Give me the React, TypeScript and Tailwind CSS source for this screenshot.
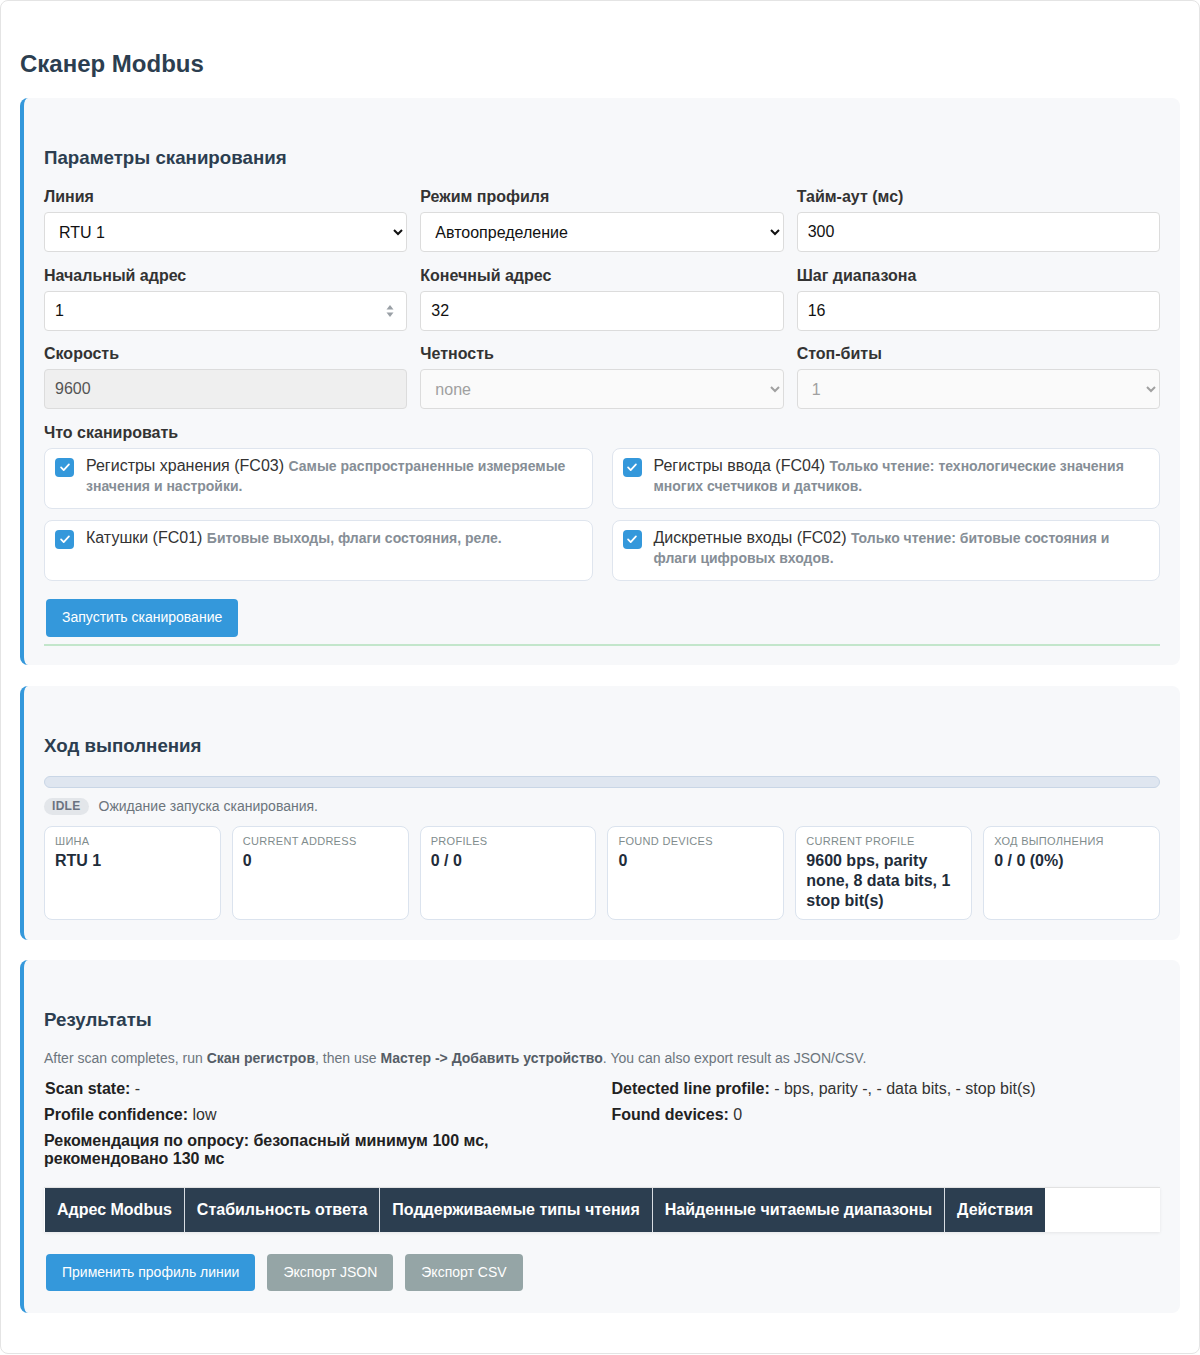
import type { ReactNode } from "react";

const font = { fontFamily: '"Liberation Sans", Arial, sans-serif' };

const scanTypes = [
  { title: "Регистры хранения (FC03)", note: "Самые распространенные измеряемые значения и настройки." },
  { title: "Регистры ввода (FC04)", note: "Только чтение: технологические значения многих счетчиков и датчиков." },
  { title: "Катушки (FC01)", note: "Битовые выходы, флаги состояния, реле." },
  { title: "Дискретные входы (FC02)", note: "Только чтение: битовые состояния и флаги цифровых входов." },
];

const stats = [
  { label: "Шина", value: "RTU 1" },
  { label: "Current address", value: "0" },
  { label: "Profiles", value: "0 / 0" },
  { label: "Found devices", value: "0" },
  { label: "Current profile", value: "9600 bps, parity none, 8 data bits, 1 stop bit(s)" },
  { label: "Ход выполнения", value: "0 / 0 (0%)" },
];

const columns = [
  "Адрес Modbus",
  "Стабильность ответа",
  "Поддерживаемые типы чтения",
  "Найденные читаемые диапазоны",
  "Действия",
];

function Section({ title, children }: { title: string; children: ReactNode }) {
  return (
    <section className="rounded-lg border-l-4 border-[#3498db] bg-[#f7f8fa] px-5 pt-5 pb-5">
      <h3 className="mt-[29px] mb-[19px] text-[18.72px] leading-[22px] font-bold text-[#2c3e50]">{title}</h3>
      {children}
    </section>
  );
}

function Field({ label, children }: { label: string; children: ReactNode }) {
  return (
    <div>
      <label className="mb-[6px] block text-[16px] leading-[18px] font-bold text-[#333]">{label}</label>
      {children}
    </div>
  );
}

// shared box geometry; colours are added per state
const boxCls = "h-10 w-full rounded-[4px] border border-[#dcdcdc] px-[10px] text-[16px] outline-none";
const activeCls = `${boxCls} bg-white text-[#111]`;
const lockedCls = `${boxCls} bg-[#fafafa] text-[#a0a0a0]`;

function CheckMark() {
  return (
    <span className="mt-[2px] flex h-[19px] w-[19px] shrink-0 items-center justify-center rounded-[4px] bg-[#3498db]">
      <svg viewBox="0 0 16 16" className="h-[14px] w-[14px]" fill="none" stroke="white" strokeWidth="2" strokeLinecap="round" strokeLinejoin="round">
        <path d="M3.5 8.5l3 3 6-6.5" />
      </svg>
    </span>
  );
}

export default function App() {
  return (
    <div className="min-h-[1355px] bg-white" style={font}>
      <div className="rounded-lg border border-[#e4e4e4] px-[19px] pt-[49px] pb-10">
        <h2 className="mb-5 text-[24px] leading-[28px] font-bold text-[#2c3e50]">Сканер Modbus</h2>

        <Section title="Параметры сканирования">
          <div className="grid grid-cols-3 gap-x-[13px] gap-y-[14.5px]">
            <Field label="Линия">
              <select className={activeCls} defaultValue="rtu1">
                <option value="rtu1">RTU 1</option>
              </select>
            </Field>
            <Field label="Режим профиля">
              <select className={activeCls} defaultValue="auto">
                <option value="auto">Автоопределение</option>
              </select>
            </Field>
            <Field label="Тайм-аут (мс)">
              <input className={activeCls} defaultValue="300" />
            </Field>
            <Field label="Начальный адрес">
              <div className="relative">
                <input className={activeCls} defaultValue="1" />
                <svg viewBox="0 0 8 14" className="absolute top-[13px] right-[13px] h-[14px] w-[8px]" fill="#9aa0a6">
                  <path d="M4 1l3.5 4.5h-7z" />
                  <path d="M4 13l3.5-4.5h-7z" />
                </svg>
              </div>
            </Field>
            <Field label="Конечный адрес">
              <input className={activeCls} defaultValue="32" />
            </Field>
            <Field label="Шаг диапазона">
              <input className={activeCls} defaultValue="16" />
            </Field>
            <Field label="Скорость">
              <input className={`${boxCls} bg-[#efefef] text-[#555]`} defaultValue="9600" disabled />
            </Field>
            <Field label="Четность">
              <select className={lockedCls} defaultValue="none" disabled>
                <option value="none">none</option>
              </select>
            </Field>
            <Field label="Стоп-биты">
              <select className={lockedCls} defaultValue="1" disabled>
                <option value="1">1</option>
              </select>
            </Field>
          </div>

          <div className="mt-[14.5px] mb-[6px] text-[16px] leading-[18px] font-bold text-[#333]">Что сканировать</div>
          <div className="grid grid-cols-2 gap-x-[19px] gap-y-[11px]">
            {scanTypes.map((t) => (
              <div key={t.title} className="flex h-[61px] gap-3 rounded-lg border border-[#dfe5ee] bg-white px-[10px] pt-[7px]">
                <CheckMark />
                <p className="text-[16px] leading-[19px] text-[#333]">
                  {t.title}{" "}
                  <span className="text-[14px] font-bold text-[#868e96]">{t.note}</span>
                </p>
              </div>
            ))}
          </div>

          <button className="mt-[18px] ml-[2px] h-[38px] rounded-[4px] bg-[#3498db] px-4 text-[14px] text-white">
            Запустить сканирование
          </button>
          <div className="mt-[7px] -mb-px h-[2px] bg-[#c3e6cb]" />
        </Section>

        <div className="h-[21px]" />

        <Section title="Ход выполнения">
          <div className="h-3 rounded-full border border-[#c9d6e6] bg-[#dfe6f0]" />
          <div className="mt-[10px] flex items-center gap-[10px]">
            <span className="rounded-full bg-[#e3e6ea] px-2 text-[12px] leading-[17px] font-bold tracking-wide text-[#6b7280]">
              IDLE
            </span>
            <span className="text-[14px] leading-[17px] text-[#6c757d]">Ожидание запуска сканирования.</span>
          </div>
          <div className="mt-[11px] grid grid-cols-6 gap-[11px]">
            {stats.map((s) => (
              <div key={s.label} className="rounded-lg border border-[#dbe3ee] bg-white px-[10px] pt-2 pb-2">
                <div className="text-[11px] leading-[13px] tracking-[0.3px] text-[#7f8c8d] uppercase">{s.label}</div>
                <div className="mt-[3px] text-[16px] leading-[20px] font-bold text-[#1f2d3a]">{s.value}</div>
              </div>
            ))}
          </div>
        </Section>

        <div className="h-5" />

        <Section title="Результаты">
          <p className="text-[14px] leading-[17px] text-[#6c757d]">
            After scan completes, run <b className="text-[#555d66]">Скан регистров</b>, then use{" "}
            <b className="text-[#555d66]">Мастер -&gt; Добавить устройство</b>. You can also export result as JSON/CSV.
          </p>
          <div className="mt-[13px] grid grid-cols-2 gap-x-[19px] gap-y-2 text-[16px] leading-[18px] text-[#333]">
            <div className="pl-px">
              <b className="text-[#222]">Scan state:</b> -
            </div>
            <div>
              <b className="text-[#222]">Detected line profile:</b> - bps, parity -, - data bits, - stop bit(s)
            </div>
            <div>
              <b className="text-[#222]">Profile confidence:</b> low
            </div>
            <div>
              <b className="text-[#222]">Found devices:</b> 0
            </div>
            <div className="pr-[90px] font-bold text-[#222]">
              Рекомендация по опросу: безопасный минимум 100 мс, рекомендовано 130 мс
            </div>
          </div>

          <div className="mt-[19px] border-t border-[#e2e2e2] bg-white shadow-[0_1px_3px_rgba(0,0,0,0.08)]">
            <table className="ml-px border-collapse">
              <thead>
                <tr>
                  {columns.map((c) => (
                    <th
                      key={c}
                      className="border-r border-[#d8dde3] bg-[#2c3e50] px-3 py-3 text-left text-[16px] leading-[20px] font-bold whitespace-nowrap text-white last:border-r-0"
                    >
                      {c}
                    </th>
                  ))}
                </tr>
              </thead>
            </table>
          </div>

          <div className="mt-[22px] mb-[2px] ml-[2px] flex gap-3">
            <button className="h-[37px] rounded-[4px] bg-[#3498db] px-4 text-[14px] text-white">
              Применить профиль линии
            </button>
            <button className="h-[37px] rounded-[4px] bg-[#95a5a6] px-4 text-[14px] text-white">Экспорт JSON</button>
            <button className="h-[37px] rounded-[4px] bg-[#95a5a6] px-4 text-[14px] text-white">Экспорт CSV</button>
          </div>
        </Section>
      </div>
    </div>
  );
}
